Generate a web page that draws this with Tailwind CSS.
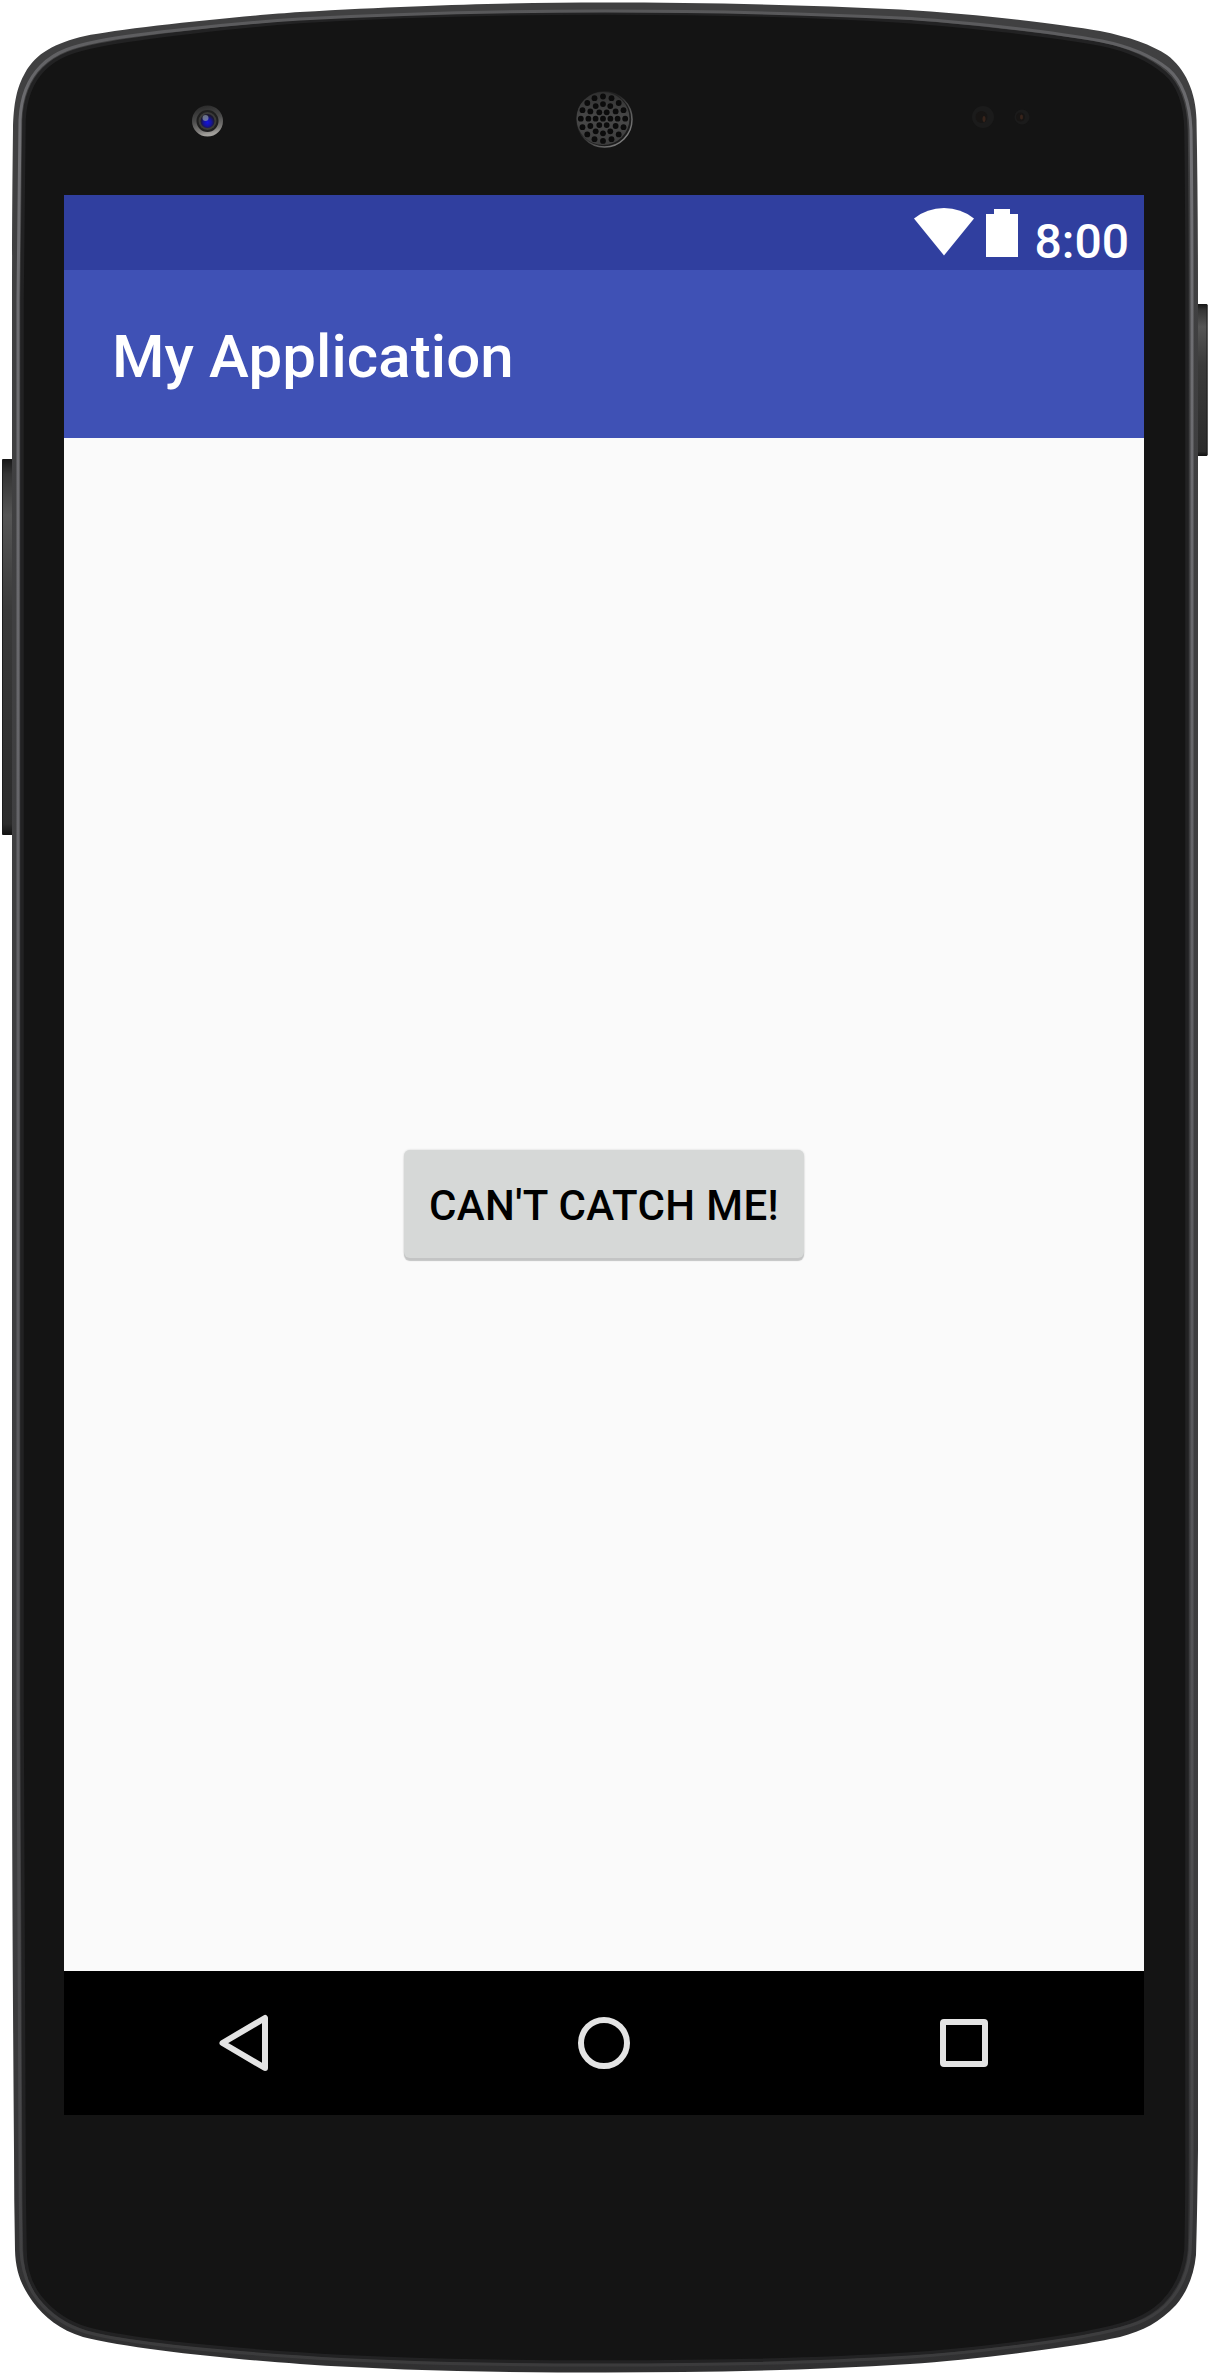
<!DOCTYPE html>
<html lang="en">
<head>
<meta charset="utf-8">
<title>My Application</title>
<script src="https://cdn.jsdelivr.net/npm/@tailwindcss/browser@4"></script>
</head>
<body class="bg-white">
<div class="relative h-[2375px] w-[1210px] overflow-hidden pt-[195px] pl-16 font-[Roboto,sans-serif]">
  <!-- Device shell -->
  <svg class="absolute inset-0" width="1210" height="2375" viewBox="0 0 1210 2375" aria-hidden="true">
    <defs>
      <linearGradient id="rim" x1="0" y1="0" x2="0" y2="1">
        <stop offset="0" stop-color="#404041"/><stop offset="0.8" stop-color="#3d3d3f"/><stop offset="1" stop-color="#303031"/>
      </linearGradient>
      <linearGradient id="shine" x1="0" y1="0" x2="0" y2="1">
        <stop offset="0" stop-color="#58585a"/><stop offset="0.05" stop-color="#727276"/><stop offset="0.5" stop-color="#5e5e62"/><stop offset="0.93" stop-color="#454547"/><stop offset="1" stop-color="#3b3b3c"/>
      </linearGradient>
      <linearGradient id="key" x1="0" y1="0" x2="0" y2="1">
        <stop offset="0" stop-color="#161616"/><stop offset="0.04" stop-color="#343434"/><stop offset="0.15" stop-color="#555"/><stop offset="0.4" stop-color="#3a3a3a"/><stop offset="0.97" stop-color="#2b2b2b"/><stop offset="1" stop-color="#111"/>
      </linearGradient>
      <linearGradient id="ring" x1="0" y1="0" x2="0.2" y2="1">
        <stop offset="0" stop-color="#262626"/><stop offset="0.5" stop-color="#4a4a4a"/><stop offset="0.85" stop-color="#7c7a78"/><stop offset="1" stop-color="#a2a09c"/>
      </linearGradient>
      <radialGradient id="lens" cx="0.5" cy="0.6" r="0.5">
        <stop offset="0" stop-color="#1414e0"/><stop offset="0.55" stop-color="#16149a"/><stop offset="1" stop-color="#1b1830"/>
      </radialGradient>
      <linearGradient id="mesh" x1="0" y1="0" x2="0" y2="1">
        <stop offset="0" stop-color="#303030"/><stop offset="0.5" stop-color="#484848"/><stop offset="1" stop-color="#3c3c3c"/>
      </linearGradient>
      <linearGradient id="meshEdge" x1="0" y1="0" x2="1" y2="1">
        <stop offset="0.4" stop-color="#222"/><stop offset="0.85" stop-color="#7a7a7a"/>
      </linearGradient>
    </defs>
    <rect x="2" y="459" width="12" height="376" rx="1" fill="url(#key)"/>
    <path d="M2.5 460V834" stroke="#1c1c1c"/>
    <rect x="1196" y="304" width="11.5" height="152" rx="1" fill="url(#key)"/>
    <path d="M1207 305V455" stroke="#1c1c1c"/>
    <path fill="url(#rim)" d="M12 300C12 230 12.500 170 13 130C13.500 103 17 87 25 73C36 53 55 43 85 36C120 28.500 240 16 300 12C430 4.500 520 2.500 605 2.500C700 2.500 800 4.500 900 9.500C980 14 1060 24 1100 31C1130 37 1152 45 1167 55C1185 68 1196 92 1196.500 120Q1198 200 1198 300V2150C1197.500 2190 1197 2225 1196 2255C1194 2275 1187 2292 1176 2305C1160 2322 1143 2331 1120 2337C1070 2348 970 2360 910 2364C800 2371 700 2372.500 605 2372.500C510 2372.500 400 2371 300 2364C230 2359 130 2349 83 2337C60 2330 44 2317 33 2302C22 2287 15.500 2272 15 2250Q14 2200 14 2150Q12 1900 12 1700Z"/>
    <path fill="#141414" stroke="#222223" stroke-width="3.500" d="M22 300Q23 200 24 120C25 98 31 82 44 69C58 55 75 50 100 45C140 37 240 26 300 21.500C430 14 520 13 605 13C700 13 800 15 900 21C960 25 1050 35 1100 44C1130 50 1150 60 1165 73C1180 86 1185.500 105 1186 130Q1187 200 1187 300V2150Q1187 2215 1186 2250C1184 2272 1175 2290 1162 2303C1146 2318 1128 2324 1100 2330C1060 2339 970 2350 910 2354C800 2361 700 2362 605 2362C510 2362 400 2361 300 2354C240 2350 135 2342 88 2329C68 2323 51 2311 40 2297C29 2283 25 2268 25 2250Q24 2200 24 2150Q22 1900 22 1700Z"/>
    <path fill="none" stroke="url(#shine)" stroke-width="3" d="M18 300Q19 200 20 120C21 96 28 79 41 66C56 51 74 46 99 41C140 33 240 23 300 19C430 12 520 11 605 11C700 11 800 13 900 18C960 21 1052 32 1102 41C1132 47 1153 57 1168 69C1184 83 1190 104 1191 130Q1192 200 1192 300V2150Q1192 2215 1190 2252C1188 2275 1178 2293 1165 2306C1149 2321 1130 2327 1101 2333C1060 2342 970 2353 910 2357C800 2364 700 2365 605 2365C510 2365 400 2364 300 2357C240 2353 133 2345 86 2332C66 2326 49 2314 38 2300C27 2286 22 2270 21 2250Q20 2200 20 2150Q18 1900 18 1700Z"/>
    <!-- Front camera -->
    <circle cx="207.500" cy="121" r="15.500" fill="url(#ring)"/>
    <circle cx="207.500" cy="121" r="11" fill="#1f1f1f"/>
    <circle cx="207.500" cy="121" r="9" fill="#3a3a38"/>
    <circle cx="207.500" cy="121" r="7" fill="url(#lens)"/>
    <circle cx="205.500" cy="118" r="3" fill="#8d9aa6" fill-opacity="0.7"/>
    <!-- Earpiece -->
    <circle cx="604.500" cy="119.500" r="27.500" fill="#1b1b1b" stroke="url(#meshEdge)" stroke-width="1.500"/>
    <circle cx="603" cy="118.500" r="26.500" fill="url(#mesh)"/>
    <g id="holes" fill="#0b0b0b"></g>
    <!-- Proximity sensors -->
    <circle cx="983" cy="117" r="11" fill="#1b1b1b"/><circle cx="981.500" cy="117" r="6" fill="#171514"/><ellipse cx="984" cy="119" rx="1.500" ry="3" fill="#38241b"/>
    <circle cx="1022" cy="117" r="7.500" fill="#1b1b1b"/><circle cx="1020.500" cy="117" r="4.500" fill="#171514"/><ellipse cx="1021.500" cy="117" rx="1.500" ry="2.500" fill="#38241b"/>
  </svg>

  <main class="relative flex h-[1920px] w-[1080px] flex-col bg-[#fafafa]">
    <div class="flex h-[75px] justify-end bg-[#303f9f] pr-[15px] text-white">
      <svg class="mt-[13px] h-12 w-[60px]" viewBox="0 0 60 48" fill="currentColor"><path d="M0 10.500Q13 0 30 0T60 10.500L30 47.500Z"/></svg>
      <svg class="mt-[14px] ml-3 h-12 w-8" viewBox="0 0 32 48" fill="currentColor"><path d="M8 0H24V5H32V48H0V5H8Z"/></svg>
      <span class="mt-5 ml-[17px] text-[48px] leading-[54px] font-medium">8:00</span>
    </div>
    <header class="flex h-[168px] items-center bg-[#3f51b5] px-12 pt-[5px]">
      <h1 class="text-[60px] leading-[70px] font-medium tracking-[0.1px] text-white">My Application</h1>
    </header>
    <section class="flex flex-1 items-center justify-center pb-px">
      <button class="h-[108px] w-[400px] rounded-md bg-[#d6d8d7] pt-[2px] text-[42px] font-medium tracking-[0.4px] text-black shadow-[0_3px_1px_#c3c4c4,0_0_2px_#c8c9c9]">CAN'T CATCH ME!</button>
    </section>
    <nav class="grid h-36 grid-cols-3 place-items-center bg-black text-[#e4e4e4]">
      <svg class="h-[72px] w-[72px]" viewBox="0 0 72 72" fill="none" stroke="currentColor" stroke-width="6" stroke-linejoin="round"><path d="M14.500 36L57 11V61Z"/></svg>
      <svg class="h-[72px] w-[72px]" viewBox="0 0 72 72" fill="none" stroke="currentColor" stroke-width="6"><circle cx="36" cy="36" r="23"/></svg>
      <svg class="h-[72px] w-[72px]" viewBox="0 0 72 72" fill="none" stroke="currentColor" stroke-width="6"><rect x="15" y="15" width="42" height="42" rx="1"/></svg>
    </nav>
  </main>
</div>
<script>
  // Earpiece perforation: one centre hole and three concentric rings.
  const holes = document.getElementById('holes');
  for (const [count, radius] of [[1, 0], [6, 7.4], [12, 14.6], [16, 22.2]]) {
    for (let i = 0; i < count; i++) {
      const a = (i / count) * Math.PI * 2;
      const c = document.createElementNS('http://www.w3.org/2000/svg', 'circle');
      c.setAttribute('cx', 603 + radius * Math.cos(a));
      c.setAttribute('cy', 118.7 + radius * Math.sin(a));
      c.setAttribute('r', 2.9);
      holes.appendChild(c);
    }
  }
</script>
</body>
</html>
